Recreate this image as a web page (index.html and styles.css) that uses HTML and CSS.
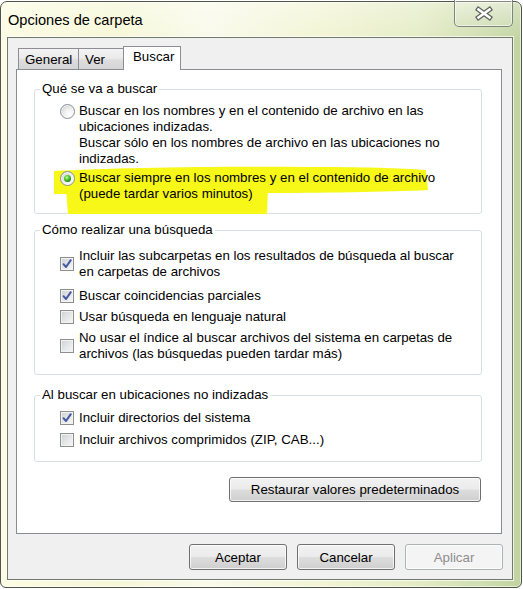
FILE: index.html
```html
<!DOCTYPE html>
<html lang="es">
<head>
<meta charset="utf-8">
<title>Opciones de carpeta</title>
<link rel="stylesheet" href="styles.css">
</head>
<body>
<div class="window">
  <div class="titlebar">
    <span class="title">Opciones de carpeta</span>
    <div class="close" aria-label="Cerrar">
      <svg width="18" height="15" viewBox="0 0 18 15">
        <path d="M3.5 3.5 L14.5 11.5 M14.5 3.5 L3.5 11.5" stroke="#5d625c" stroke-width="5" stroke-linecap="square" fill="none"/>
        <path d="M3.5 3.5 L14.5 11.5 M14.5 3.5 L3.5 11.5" stroke="#ffffff" stroke-width="2.6" stroke-linecap="square" fill="none"/>
      </svg>
    </div>
  </div>
  <div class="client">
    <div class="tabs">
      <div class="tab t-general">General</div>
      <div class="tab t-ver">Ver</div>
      <div class="tab t-buscar active">Buscar</div>
    </div>
    <div class="panel">
      <fieldset class="group g1">
        <legend>Qué se va a buscar</legend>
        <div class="opts">
          <div class="radio-row">
            <span class="radio"></span>
            <span class="label">Buscar en los nombres y en el contenido de archivo en las<br>ubicaciones indizadas.<br>Buscar sólo en los nombres de archivo en las ubicaciones no<br>indizadas.</span>
          </div>
          <div class="radio-row marked">
            <svg class="marker" width="380" height="50" viewBox="0 0 380 50" aria-hidden="true">
              <path d="M3 5 C 60 2, 160 0, 260 1 C 310 1, 350 2, 375 4 L 377 24 C 300 28, 150 27, 3 28 Z" fill="#f7f718"/>
              <path d="M15 22 L 217 22 L 216 48 L 17 48 Z" fill="#f7f718"/>
            </svg>
            <span class="radio on"></span>
            <span class="label">Buscar siempre en los nombres y en el contenido de archivo<br>(puede tardar varios minutos)</span>
          </div>
        </div>
      </fieldset>

      <fieldset class="group g2">
        <legend>Cómo realizar una búsqueda</legend>
        <div class="checks">
          <div class="check-row">
            <span class="check on"><svg width="12" height="12" viewBox="0 0 12 12"><path d="M2.5 6.2 L5 9 L9.8 2.2" stroke="#4358a0" stroke-width="2" fill="none" stroke-linecap="round" stroke-linejoin="round"/></svg></span>
            <span class="label">Incluir las subcarpetas en los resultados de búsqueda al buscar<br>en carpetas de archivos</span>
          </div>
          <div class="check-row after-multi">
            <span class="check on"><svg width="12" height="12" viewBox="0 0 12 12"><path d="M2.5 6.2 L5 9 L9.8 2.2" stroke="#4358a0" stroke-width="2" fill="none" stroke-linecap="round" stroke-linejoin="round"/></svg></span>
            <span class="label">Buscar coincidencias parciales</span>
          </div>
          <div class="check-row">
            <span class="check"></span>
            <span class="label">Usar búsqueda en lenguaje natural</span>
          </div>
          <div class="check-row">
            <span class="check"></span>
            <span class="label">No usar el índice al buscar archivos del sistema en carpetas de<br>archivos (las búsquedas pueden tardar más)</span>
          </div>
        </div>
      </fieldset>

      <fieldset class="group g3">
        <legend>Al buscar en ubicaciones no indizadas</legend>
        <div class="checks">
          <div class="check-row">
            <span class="check on"><svg width="12" height="12" viewBox="0 0 12 12"><path d="M2.5 6.2 L5 9 L9.8 2.2" stroke="#4358a0" stroke-width="2" fill="none" stroke-linecap="round" stroke-linejoin="round"/></svg></span>
            <span class="label">Incluir directorios del sistema</span>
          </div>
          <div class="check-row">
            <span class="check"></span>
            <span class="label">Incluir archivos comprimidos (ZIP, CAB...)</span>
          </div>
        </div>
      </fieldset>

      <button class="btn restore">Restaurar valores predeterminados</button>
    </div>
    <div class="actions">
      <button class="btn">Aceptar</button>
      <button class="btn">Cancelar</button>
      <button class="btn disabled">Aplicar</button>
    </div>
  </div>
</div>
</body>
</html>
```
FILE: styles.css
```css
* {
  box-sizing: border-box;
}

html,
body {
  margin: 0;
  padding: 0;
}

body {
  width: 523px;
  height: 589px;
  padding-top: 1px;
  background: #ffffff;
  font-family: "Liberation Sans", Arial, sans-serif;
  font-size: 13.3px;
  color: #000000;
  overflow: hidden;
}

.window {
  width: 522px;
  height: 587px;
  border: 1px solid #4f5449;
  border-radius: 7px 7px 6px 6px;
  background:
    linear-gradient(180deg, rgba(255, 255, 255, 0.35) 0%, rgba(255, 255, 255, 0) 40px),
    linear-gradient(90deg, #fbfce2 0%, #f6f7d6 22%, #f9faea 40%, #f2f4d3 62%, #e4ecc5 80%, #cddcad 94%, #c1d3a0 100%);
  box-shadow: inset 0 0 0 1px rgba(255, 255, 255, 0.6);
  display: flex;
  flex-direction: column;
}

.titlebar {
  height: 35px;
  display: flex;
  justify-content: space-between;
  align-items: flex-start;
  flex: none;
}

.title {
  padding: 8px 0 0 7px;
  font-size: 14.6px;
  line-height: 20px;
  color: #000000;
}

.close {
  margin-top: -2px;
  margin-right: 8px;
  width: 59px;
  height: 27px;
  border: 1px solid #7d8678;
  border-top: none;
  border-radius: 0 0 5px 5px;
  background: linear-gradient(180deg, rgba(255, 255, 255, 0.3), rgba(215, 226, 195, 0.4));
  box-shadow: inset 0 0 0 1px rgba(255, 255, 255, 0.55);
  display: flex;
  align-items: center;
  justify-content: center;
}

.client {
  flex: 1;
  margin: 0 8px 7px 6px;
  border: 1px solid #6f7a6a;
  box-shadow: 0 0 0 1px rgba(255, 255, 255, 0.7);
  background: #f0f0f0;
  padding: 8px 9px 0 8px;
  display: flex;
  flex-direction: column;
}

.tabs {
  display: flex;
  align-items: flex-end;
  height: 23px;
  padding-left: 2px;
  position: relative;
  z-index: 1;
}

.tab {
  height: 21px;
  border: 1px solid #8c8e94;
  border-bottom: none;
  background: linear-gradient(180deg, #f3f3f3 0%, #ebebeb 45%, #dddddd 55%, #d5d5d5 100%);
  padding: 2px 0 0 6px;
  line-height: 17px;
  white-space: nowrap;
}

.t-general {
  width: 61px;
}

.t-ver {
  width: 46px;
  margin-left: -1px;
}

.t-buscar {
  width: 58px;
  margin-left: -1px;
  padding-left: 9px;
}

.tab.active {
  height: 24px;
  margin-bottom: -1px;
  background: #ffffff;
  padding-top: 1px;
}

.panel {
  height: 465px;
  margin-right: 1px;
  border: 1px solid #898c95;
  background: #ffffff;
  display: flex;
  flex-direction: column;
  flex: none;
}

.group {
  margin: 0 19px 0 17px;
  padding: 0;
  min-inline-size: 0;
  border: 1px solid #d5dfe5;
  border-radius: 3px;
}

.group legend {
  margin-left: 5px;
  padding: 0 2px;
  line-height: 16px;
  color: #000000;
}

.g1 {
  margin-top: 11px;
}

.g2 {
  margin-top: 8px;
}

.g3 {
  margin-top: 12px;
}

.label {
  line-height: 16px;
  white-space: nowrap;
}

.opts {
  padding: 6px 0 11px 25px;
  display: flex;
  flex-direction: column;
  gap: 3px;
}

.radio-row {
  display: flex;
  align-items: flex-start;
  gap: 4px;
}

.marked {
  position: relative;
  isolation: isolate;
}

.marker {
  position: absolute;
  left: -9px;
  top: -4px;
  z-index: -1;
}

.radio {
  flex: none;
  width: 15px;
  height: 15px;
  margin-top: 1px;
  border-radius: 50%;
  border: 1px solid #8b9097;
  background: radial-gradient(circle at 65% 70%, #ffffff 0%, #f3f3f3 35%, #d2d2d2 80%, #c4c4c4 100%);
  box-shadow: inset 0 0 0 1px rgba(255, 255, 255, 0.7);
  position: relative;
}

.radio.on::after {
  content: "";
  position: absolute;
  left: 3px;
  top: 3px;
  width: 7px;
  height: 7px;
  border-radius: 50%;
  background: radial-gradient(circle at 40% 35%, #c4f7a0 0%, #5ccd33 35%, #1f8a12 70%, #135c0b 100%);
}

.checks {
  display: flex;
  flex-direction: column;
}

.g2 .checks {
  padding: 10px 0 12px 25px;
  gap: 5px;
}

.g2 .after-multi {
  margin-top: 3px;
}

.g3 .checks {
  padding: 7px 0 13px 25px;
  gap: 6px;
}

.check-row {
  display: flex;
  align-items: center;
  gap: 5px;
}

.check {
  flex: none;
  width: 14px;
  height: 14px;
  border: 1px solid #8e8f8f;
  background: linear-gradient(135deg, #cfd0d2 0%, #e4e5e6 50%, #f7f7f7 100%);
  box-shadow: inset 0 0 0 1px #f2f2f2;
  display: flex;
  align-items: center;
  justify-content: center;
}

.btn {
  font-family: "Liberation Sans", Arial, sans-serif;
  font-size: 13.3px;
  color: #000000;
  height: 26px;
  border: 1px solid #707070;
  border-radius: 3px;
  background: linear-gradient(180deg, #f2f2f2 0%, #ebebeb 48%, #dddddd 52%, #cfcfcf 100%);
  box-shadow: inset 0 0 0 1px rgba(255, 255, 255, 0.75);
  padding: 0;
}

.restore {
  align-self: flex-end;
  margin: 15px 20px 0 0;
  width: 252px;
  height: 25px;
}

.actions {
  margin-top: 10px;
  display: flex;
  justify-content: flex-end;
  gap: 10px;
}

.actions .btn {
  width: 98px;
}

.btn.disabled {
  color: #8d8d8d;
  border-color: #adb2b5;
  background: #f4f4f4;
}
```
